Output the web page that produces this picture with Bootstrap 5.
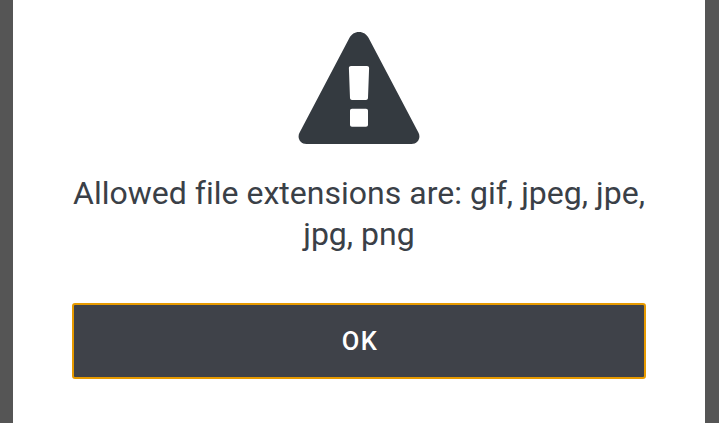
<!DOCTYPE html>
<html lang="en">
<head>
<meta charset="utf-8">
<title>Alert</title>
<link href="https://cdn.jsdelivr.net/npm/bootstrap@5.3.0/dist/css/bootstrap.min.css" rel="stylesheet">
<style>
html, body { height: 100%; overflow: hidden; }
body { background: #555; font-family: Roboto, "Liberation Sans", sans-serif; }
.dlg-panel { margin: 0 14px 0 13px; height: 423px; background: #fff; padding: 32px 59px 0; }
.dlg-icon { width: 122px; height: 112px; display: block; }
.dlg-msg { margin: 29px -4px 0; font-size: 32px; line-height: 41px; color: #3a4047; text-align: center; letter-spacing: .015px; }
.dlg-ok { margin-top: 48px; height: 76px; background: #3f4249; border: 2px solid #e79a00; border-radius: 3px; color: #fff; font-size: 25.5px; font-weight: 500; letter-spacing: 1.3px; padding: 1px 0 0 2px; }
.dlg-ok:hover { background: #3f4249; color: #fff; border-color: #e79a00; }
</style>
</head>
<body>
<div class="dlg-panel d-flex flex-column">
  <div class="d-flex justify-content-center">
    <svg class="dlg-icon" viewBox="0 0 122 112" aria-hidden="true">
      <path fill="#343a40" fill-rule="evenodd" d="M61 0c4.500 0 7.500 2.300 9.500 5.800l50 95c2.700 5.300-.8 11.200-7 11.200H8.500c-6.200 0-9.700-5.900-7-11.200l50-95C53.500 2.300 56.500 0 61 0ZM53 34c-1.300 0-2.200 1-2.100 2.200l1.100 29.800c.1 1.200 1 2 2 2h14c1 0 1.900-.8 2-2l1.100-29.800c.1-1.200-.8-2.200-2.100-2.200ZM54 76.700c-1.200 0-2 .8-2 2v14c0 1.200.8 2 2 2h14c1.200 0 2-.8 2-2v-14c0-1.200-.8-2-2-2Z"/>
    </svg>
  </div>
  <p class="dlg-msg">Allowed file extensions are: gif, jpeg, jpe, jpg, png</p>
  <button type="button" class="btn dlg-ok w-100">OK</button>
</div>
<script src="https://cdn.jsdelivr.net/npm/bootstrap@5.3.0/dist/js/bootstrap.bundle.min.js"></script>
</body>
</html>
